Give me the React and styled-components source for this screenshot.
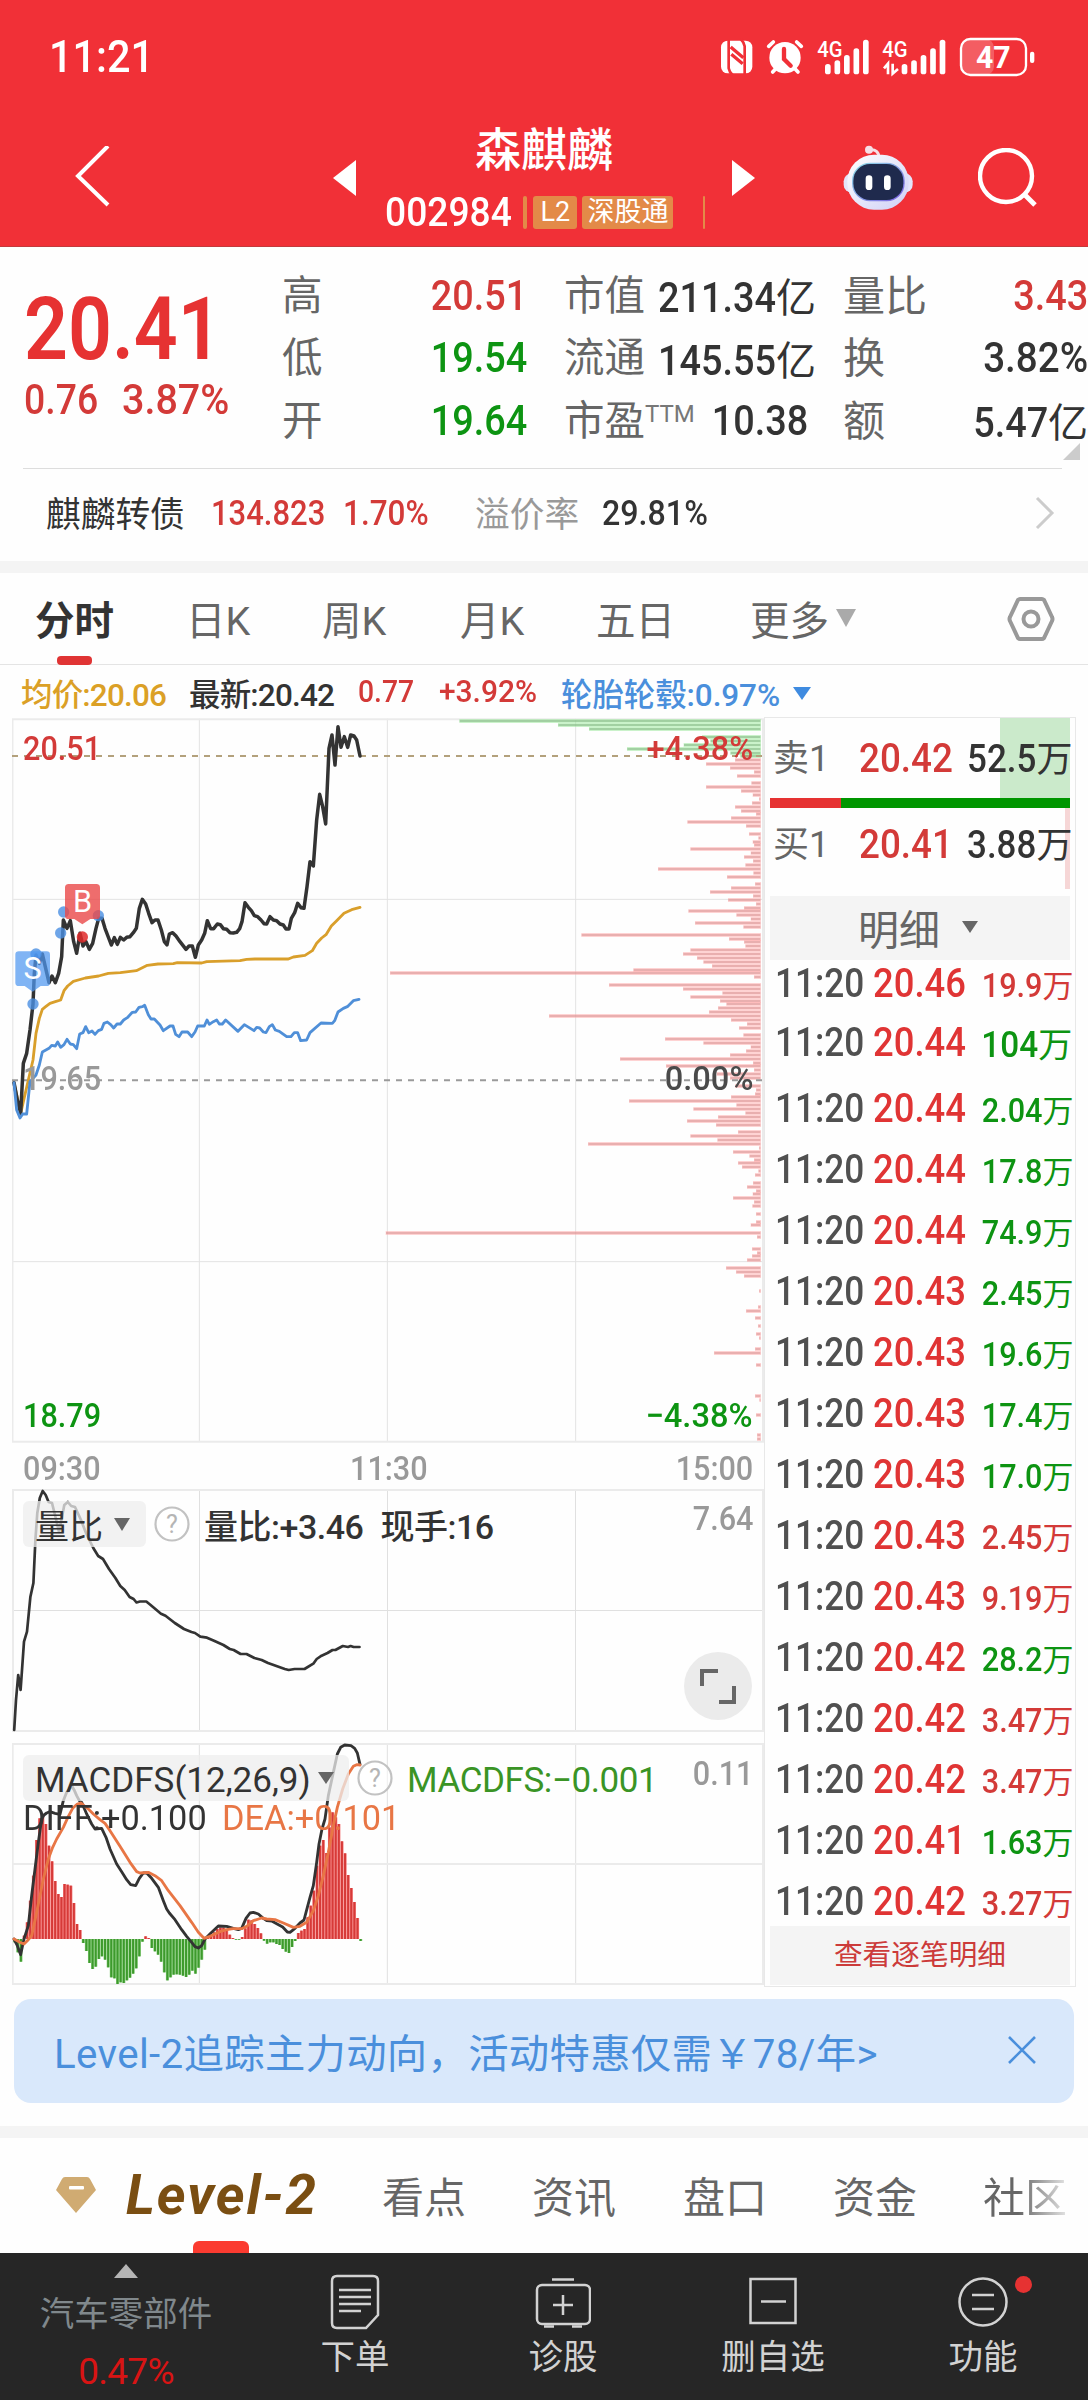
import React from 'react';
import styled, { createGlobalStyle, css } from 'styled-components';

const RED = '#e03434';
const UP = '#d33a38';
const DOWN = '#0d9412';
const INK = '#333';
const GREY = '#666';
const PALE = '#999';
const BLUE = '#4a8fdc';

const GlobalStyle = createGlobalStyle`
  * { box-sizing: border-box; }
  html, body { margin: 0; background: #fefefe; }
  body {
    width: 1088px;
    font-family: Roboto, 'Noto Sans CJK SC', sans-serif;
    color: ${INK};
    white-space: nowrap;
    overflow-x: hidden;
  }
  svg { display: block; flex: none; }
`;

const Page = styled.div`
  width: 1088px;
  height: 2400px;
  display: flex;
  flex-direction: column;
  overflow: hidden;
`;

// narrow figures: squeezed towards the side they are aligned to
const Num = styled.span`
  display: inline-block;
  font-size: ${(p) => p.$size || 42}px;
  font-weight: ${(p) => p.$weight || 500};
  color: ${(p) => p.$color || INK};
  transform: scaleX(${(p) => p.$sx || 0.9});
  transform-origin: ${(p) => (p.$end ? 'right' : 'left')} center;
`;

const Cn = styled.span`
  font-size: ${(p) => p.$size || 40.5}px;
  font-weight: ${(p) => p.$weight || 400};
  color: ${(p) => p.$color || GREY};
`;

const Mixed = styled.span`
  font-size: ${(p) => p.$size}px;
  font-weight: ${(p) => p.$weight || 400};
  letter-spacing: ${(p) => p.$ls || 0}em;
  color: ${(p) => p.$color || INK};
  margin-left: ${(p) => p.$ml || 0}px;
  margin-top: ${(p) => p.$mt || 0}px;
`;

const Amount = styled.div`
  display: flex;
  align-items: baseline;
  padding-right: ${(p) => p.$pr || 0}px;
`;

const Unit = styled.span`
  font-size: ${(p) => p.$size}px;
  color: ${(p) => p.$color || INK};
`;

/* ---------- header ---------- */

const Top = styled.header`
  height: 247px;
  flex: none;
  background: #f13037;
  border-bottom: 1px solid #c33a3c;
  color: #fff;
`;

const StatusBar = styled.div`
  height: 113px;
  padding: 0 52px 0 49px;
  display: flex;
  justify-content: space-between;
  align-items: center;
`;

const NavBar = styled.div`
  height: 130px;
  display: grid;
  grid-template-columns: 74px 259px 422px 88px 135px 1fr;
  align-items: center;
`;

const Middle = styled.div`
  display: flex;
  align-items: center;
  height: 130px;
`;

const Stock = styled.div`
  width: 376px;
  flex: none;
  padding: 14px 0 0 29px;
  height: 133px;
`;

const StockName = styled.div`
  height: 48px;
  line-height: 48px;
  font-size: 46px;
  font-weight: 500;
  padding-left: 90px;
`;

const StockCode = styled.div`
  height: 32px;
  margin-top: 23px;
  display: flex;
  align-items: center;
`;

const Badge = styled.span`
  height: 33px;
  line-height: 32px;
  width: ${(p) => p.$w}px;
  flex: none;
  margin-left: ${(p) => p.$gap}px;
  text-align: center;
  font-size: 27px;
  background: #e38a48;
  border-radius: 3px;
`;

/* ---------- quote ---------- */

const Quote = styled.section`
  height: 221px;
  flex: none;
  display: grid;
  grid-template-columns: 258px 245px 244px 245px;
  padding: 17px 0 0 24px;
  grid-template-rows: repeat(3, 62.5px);
`;

const PriceBlock = styled.div`
  grid-row: 1 / 4;
  padding-top: 20px;
`;

const Price = styled.div`
  height: 88px;
  line-height: 90px;
`;

const Change = styled.div`
  height: 56px;
  line-height: 56px;
  display: grid;
  grid-template-columns: 98px 1fr;
  justify-items: start;
`;

const Stat = styled.div`
  display: flex;
  align-items: center;
  justify-content: space-between;
  margin-left: ${(p) => p.$ml || 0}px;
  width: 245px;
  > ${Cn} {
    padding-bottom: 6px;
  }
`;

const Sup = styled.sup`
  font-size: 24px;
  color: #777;
  line-height: 0;
  vertical-align: 13px;
`;

const Divider = styled.div`
  height: 1px;
  flex: none;
  margin: 0 26px 0 23px;
  background: #ddd;
`;

const Corner = styled.i`
  width: 0;
  height: 0;
  position: absolute;
  left: 1063px;
  top: 443px;
  border-left: 17px solid transparent;
  border-bottom: 17px solid #ccc;
`;

const Bond = styled.section`
  height: 92px;
  flex: none;
  display: grid;
  grid-template-columns: 165px 132px 132px 127px 433px 1fr;
  align-items: center;
  justify-items: start;
  padding: 0 0 4px 46px;
  > ${Cn} {
    padding-bottom: 2px;
  }
`;

const Band = styled.div`
  height: 12px;
  flex: none;
  background: #f4f4f4;
`;

/* ---------- period tabs ---------- */

const PeriodTabs = styled.nav`
  height: 92px;
  flex: none;
  display: grid;
  grid-template-columns: 151px 136px 138px 136px 154px 257px 1fr;
  align-items: center;
  padding-left: 35px;
  border-bottom: 1px solid #e4e4e4;
`;

const Period = styled.div`
  position: relative;
  height: 92px;
  padding-bottom: 3px;
  font-size: 39.5px;
  color: ${GREY};
  display: flex;
  align-items: center;
  ${(p) => p.$active && css`
    color: ${INK};
    font-weight: 700;
    &::after {
      content: '';
      position: absolute;
      left: 22px;
      bottom: 0;
      width: 35px;
      height: 9px;
      border-radius: 4px;
      background: ${RED};
    }
  `}
`;

const Down = styled.i`
  border: ${(p) => p.$w / 2}px solid transparent;
  border-top: ${(p) => p.$h}px solid ${(p) => p.$color};
  border-bottom: 0;
  margin-left: ${(p) => p.$ml || 0}px;
  margin-top: ${(p) => p.$mt || 0}px;
  justify-self: start;
`;

const Info = styled.div`
  height: 53px;
  flex: none;
  display: grid;
  grid-template-columns: 168px 169px 81px 122px auto 1fr;
  align-items: center;
  justify-items: start;
  padding-left: 21px;
`;

/* ---------- board: charts + tape ---------- */

const Board = styled.section`
  height: 1271px;
  flex: none;
  display: flex;
  padding-left: 12px;
`;

const Charts = styled.div`
  width: 752px;
`;

const Pane = styled.div`
  position: relative;
  height: ${(p) => p.$h}px;
  margin-top: ${(p) => p.$mt || 0}px;
`;

const Label = styled(Num)`
  position: absolute;
  left: ${(p) => (p.$end ? 'auto' : `${p.$l || 11}px`)};
  right: ${(p) => (p.$end ? '11px' : 'auto')};
  top: ${(p) => p.$t}px;
  line-height: 34px;
`;

const TimeAxis = styled.div`
  height: 46px;
  display: grid;
  grid-template-columns: 327px 1fr auto;
  align-items: center;
  justify-items: start;
  padding: 4px 11px 0 11px;
`;

const Legend = styled.div`
  position: absolute;
  left: 11px;
  top: 12px;
  height: 46px;
  display: flex;
  align-items: center;
`;

const Picker = styled.div`
  width: ${(p) => p.$w}px;
  height: 46px;
  padding-left: 12px;
  display: flex;
  align-items: center;
  background: rgba(238, 238, 238, 0.75);
  border-radius: 6px;
  margin-right: 8px;
`;

const Expand = styled.div`
  position: absolute;
  left: 672px;
  top: 163px;
  width: 68px;
  height: 68px;
  border-radius: 50%;
  background: #ebebeb;
`;

const Tape = styled.aside`
  width: 312px;
  height: 1270px;
  margin-top: -1px;
  border: 1px solid #e8e8e8;
  padding: 0 5px;
  display: flex;
  flex-direction: column;
`;

const Level = styled.div`
  height: ${(p) => p.$h}px;
  padding: ${(p) => p.$pt}px 1px 0 3px;
  display: grid;
  grid-template-columns: 86px 1fr auto;
  align-items: start;
  justify-items: start;
  line-height: 48px;
  background: linear-gradient(${(p) => p.$tint}, ${(p) => p.$tint}) right top / ${(p) => p.$fill}px 100% no-repeat;
`;

const Ratio = styled.div`
  height: 10px;
  background: linear-gradient(90deg, #e63232 71px, #009600 71px);
`;

const TapeHead = styled.div`
  height: 64px;
  margin-top: 7px;
  padding: 0 0 3px 88px;
  display: flex;
  align-items: center;
  background: #f4f4f4;
`;

const Tick = styled.div`
  height: ${(p) => p.$h}px;
  flex: none;
  display: grid;
  grid-template-columns: 98px 1fr auto;
  align-items: center;
  justify-items: start;
  padding: 0 4px 0 5px;
`;

const TapeFoot = styled.div`
  height: 59px;
  flex: none;
  line-height: 59px;
  text-align: center;
  font-size: 28.7px;
  color: #cc3b3a;
  background: #f4f4f4;
  margin-top: -6px;
`;

/* ---------- banner and bottom ---------- */

const Banner = styled.div`
  height: 104px;
  flex: none;
  margin: 10px 14px 23px;
  padding: 0 38px 2px 40px;
  display: flex;
  align-items: center;
  justify-content: space-between;
  border-radius: 17px;
  background: #d9e8fb;
  color: ${BLUE};
  font-size: 40.3px;
  letter-spacing: 0.009em;
`;

const InfoTabs = styled.nav`
  position: relative;
  height: 115px;
  flex: none;
  display: grid;
  grid-template-columns: 70px 256px 150px 151px 150px 150px 1fr;
  align-items: center;
  padding: 0 0 2px 56px;
  &::after {
    content: '';
    position: absolute;
    left: 193px;
    bottom: 0;
    width: 56px;
    height: 12px;
    border-radius: 6px 6px 0 0;
    background: #fb3b30;
  }
`;

const Brand = styled.span`
  font-size: 55px;
  font-weight: 700;
  font-style: italic;
  letter-spacing: 0.035em;
  color: #7a4e12;
`;

const Fade = styled.span`
  background: linear-gradient(90deg, #666 35px, #eee 88px);
  -webkit-background-clip: text;
  color: transparent;
  font-size: 42px;
`;

const BottomBar = styled.footer`
  height: 147px;
  flex: none;
  display: grid;
  grid-template-columns: 252px 206px 210px 210px 210px;
  background: #262626;
  color: #d2d2d2;
`;

const Sector = styled.div`
  display: flex;
  flex-direction: column;
  align-items: center;
  padding-top: 11px;
  line-height: 58px;
`;

const Up = styled.i`
  border: 12.5px solid transparent;
  border-bottom: 14px solid #b5b5b5;
  border-top: 0;
  margin-bottom: 7px;
`;

const Action = styled.div`
  position: relative;
  display: flex;
  flex-direction: column;
  align-items: center;
  padding-top: 20px;
  font-size: 34.5px;
  line-height: 44px;
`;

const Dot = styled.i`
  position: absolute;
  left: 137px;
  top: 23px;
  width: 17px;
  height: 17px;
  border-radius: 50%;
  background: #e63232;
`;

const ActionLabel = styled.span`
  margin-top: 4px;
`;

/* ---------- icons ---------- */

const Signal = ({ x, bars }) =>
  bars.map((h, i) => (
    <rect key={i} x={x + i * 28.5} y={148 - h} width="17" height={h} rx="8" fill="#fff" />
  ));

const StatusIcons = () => (
  <svg width="316" height="40" viewBox="58 36 948 120">
    <rect x="61" y="47" width="94" height="98" rx="20" fill="#fff" />
    <g stroke="#f13037" strokeWidth="8" fill="none">
      <path d="M84 44V130Q86 142 96 150M132 148V64Q130 52 120 42" />
      <path d="M90 66L128 98M92 88L126 116" strokeWidth="10" />
    </g>
    <g fill="none" stroke="#fff" strokeWidth="11" strokeLinecap="round">
      <path d="M204 64L218 51M302 64L288 51M216 141L228 128M292 141L280 128" />
    </g>
    <circle cx="253" cy="98" r="47" fill="#fff" />
    <path d="M250 72V102L270 122" fill="none" stroke="#f13037" strokeWidth="13" strokeLinecap="round" />
    <g fill="#fff" fontSize="66" fontWeight="500">
      <text x="350" y="95" textLength="76" lengthAdjust="spacingAndGlyphs">4G</text>
      <text x="545" y="95" textLength="76" lengthAdjust="spacingAndGlyphs">4G</text>
    </g>
    <Signal x={373} bars={[31, 42, 58, 78, 104]} />
    <Signal x={603} bars={[31, 42, 58, 78, 104]} />
    <path d="M550 130L562 116V148M576 116V146L592 132" fill="none" stroke="#fff" strokeWidth="8" />
    <rect x="782" y="42" width="98" height="108" rx="26" fill="#fff" fillOpacity=".22" />
    <rect x="781" y="42" width="195" height="108" rx="28" fill="none" stroke="#fff" strokeWidth="7" />
    <rect x="988" y="80" width="13" height="34" rx="6" fill="#fff" />
    <text x="826" y="130" fill="#fff" fontSize="96" fontWeight="700" textLength="104" lengthAdjust="spacingAndGlyphs">47</text>
  </svg>
);

const Robot = () => (
  <svg width="70" height="66" viewBox="430 355 210 198">
    <defs>
      <linearGradient id="shell" x1="0" y1="0" x2="1" y2="1">
        <stop offset="0" stopColor="#fff" />
        <stop offset="1" stopColor="#cfd0f6" />
      </linearGradient>
      <linearGradient id="rim" x1="0" y1="0" x2="1" y2="1">
        <stop offset="0" stopColor="#8fe0e8" />
        <stop offset="1" stopColor="#7a5be0" />
      </linearGradient>
    </defs>
    <path d="M508 370Q538 366 538 394" fill="none" stroke="#f6dfe6" strokeWidth="9" />
    <circle cx="508" cy="369" r="12" fill="#f6dfe6" />
    <rect x="432" y="440" width="207" height="58" rx="24" fill="#e4e4fa" />
    <rect x="443" y="384" width="184" height="165" rx="80" fill="url(#shell)" />
    <rect x="457" y="408" width="158" height="116" rx="54" fill="url(#rim)" />
    <rect x="461" y="412" width="150" height="108" rx="50" fill="#1f2a4d" />
    <rect x="498" y="446" width="20" height="44" rx="10" fill="#fff" />
    <rect x="553" y="446" width="20" height="44" rx="10" fill="#fff" />
  </svg>
);

const Help = () => (
  <svg width="36" height="36" viewBox="0 0 36 36">
    <circle cx="18" cy="18" r="16.5" fill="#fff" fillOpacity=".5" stroke="#c2c2c2" strokeWidth="2.2" />
    <text x="18" y="27" fontSize="25" textAnchor="middle" fill="#b5b5b5">?</text>
  </svg>
);

/* ---------- chart data ---------- */

// chart coordinates are three units per screen pixel
const PRICE = '42,1148 52,1200 62,1240 70,1090 80,1060 90,990 99,912 103,820 108,765 118,790 127,762 147,848 156,828 166,848 176,820 185,770 190,660 201,685 211,662 221,725 230,760 240,700 249,738 258,725 268,748 278,730 288,685 296,655 306,655 315,685 334,735 343,713 352,733 361,712 371,720 380,712 390,710 400,698 409,685 418,625 427,598 437,612 446,640 456,668 465,660 474,660 484,690 493,725 501,735 508,702 518,698 528,708 540,725 558,748 567,738 577,738 586,772 595,735 605,720 614,700 622,662 632,686 641,686 652,672 661,674 670,686 680,688 690,698 700,699 710,697 719,686 726,665 735,608 745,622 754,632 763,647 773,650 783,660 792,671 800,672 810,650 820,660 830,662 840,672 850,675 858,687 867,687 874,655 884,638 893,610 903,623 912,625 921,560 930,485 940,498 950,360 959,283 968,320 977,372 987,145 996,105 1005,195 1014,80 1023,142 1033,110 1043,142 1052,105 1062,108 1070,120 1080,168';
const AVERAGE = '42,1148 62,1240 85,1140 99,1080 108,1000 118,955 127,928 137,920 150,910 166,905 182,900 192,872 203,858 220,844 256,834 296,828 325,820 361,818 409,812 442,796 474,792 520,791 532,788 605,789 620,785 720,782 740,778 765,777 865,777 880,771 915,766 937,752 950,730 965,714 978,704 994,678 1010,662 1032,640 1055,629 1080,622';
const SECTOR = '42,1148 50,1230 60,1254 68,1242 80,1242 90,1145 108,1125 118,1095 127,1056 147,1045 155,1036 166,1038 173,1026 182,1042 192,1034 201,1018 211,1032 220,1034 230,1046 239,1002 249,998 257,980 266,998 276,993 285,1003 295,992 305,988 312,970 322,966 332,974 341,984 351,972 361,972 371,960 382,953 397,937 407,936 417,922 427,920 434,916 445,944 453,957 463,957 480,975 490,992 510,978 519,978 527,1003 537,1010 546,996 563,996 575,1010 585,996 593,978 613,978 621,960 628,973 640,965 650,960 658,972 667,972 677,960 714,994 733,974 762,992 770,982 779,984 790,996 798,998 808,980 817,974 826,990 838,994 860,1010 873,1010 883,998 893,998 902,1022 920,1020 930,998 963,969 997,970 1004,962 1014,936 1030,925 1042,920 1060,902 1077,898';

// [y, length] of every price level
const ASKS = [[63, 903], [75, 607], [87, 514], [111, 175], [123, 150], [135, 230], [147, 400], [159, 90], [168, 60]];
const BIDS = [
  [180, 76], [192, 163], [204, 91], [216, 19], [228, 70], [249, 27], [261, 163], [273, 58], [285, 23], [297, 4],
  [309, 25], [321, 76], [333, 58], [342, 13], [354, 88], [366, 219], [378, 43], [402, 34], [414, 6], [426, 23],
  [435, 19], [447, 210], [459, 29], [471, 49], [483, 22], [495, 45], [507, 307], [519, 21], [531, 100], [552, 16],
  [564, 88], [576, 151], [588, 22], [600, 97], [612, 13], [624, 49], [633, 216], [645, 72], [657, 29], [669, 196],
  [681, 51], [705, 537], [717, 94], [726, 49], [738, 45], [750, 210], [762, 232], [774, 190], [786, 171], [798, 145],
  [810, 381], [819, 1111], [831, 19], [855, 454], [867, 232], [879, 114], [891, 210], [903, 121], [912, 102],
  [924, 127], [936, 154], [948, 634], [960, 88], [972, 40], [984, 64], [1005, 51], [1017, 286], [1029, 171],
  [1041, 29], [1053, 43], [1065, 91], [1077, 421], [1089, 22], [1098, 283], [1110, 19], [1122, 131], [1134, 91],
  [1158, 76], [1170, 13], [1182, 16], [1191, 88], [1203, 394], [1215, 72], [1227, 201], [1239, 45], [1251, 127],
  [1263, 220], [1275, 133], [1296, 67], [1308, 210], [1320, 129], [1332, 517], [1344, 4], [1356, 82], [1368, 33],
  [1380, 19], [1389, 67], [1401, 55], [1413, 6], [1425, 16], [1449, 22], [1461, 40], [1473, 13], [1482, 23],
  [1494, 82], [1506, 19], [1518, 24], [1542, 13], [1566, 13], [1575, 29], [1599, 1124], [1611, 10], [1647, 25],
  [1659, 10], [1668, 25], [1680, 40], [1704, 103], [1716, 73], [1728, 49], [1773, 4], [1821, 7], [1833, 43],
  [1854, 16], [1878, 7], [1902, 13], [1914, 4], [1947, 16], [1959, 139], [1995, 13], [2088, 16], [2100, 3],
  [2145, 13], [2205, 10], [2217, 10],
];

const VOLUME_RATIO = '14.2,1730 16,1700 18.2,1675 20.6,1690 24,1641.7 27,1631.7 30.4,1596.7 33.4,1583 35.4,1540 37.3,1513 39.8,1498 42.7,1491 45.7,1495 48.6,1502 52,1503 55.5,1517 59,1532 62,1517 64.3,1505 67.8,1502 71.2,1506 75,1507 81,1520 86,1533 93.3,1548 98.2,1556 103,1559 109,1569 115.4,1578 120.3,1586 124.7,1590 129.6,1597 133.6,1599 136.5,1602.5 140,1601.5 146.3,1601.5 150.3,1604.7 161,1613.7 165.5,1615.7 174.8,1623 184,1629 191.5,1632 195,1633 200.3,1636.7 207,1637.7 214,1640.7 223.4,1645 229.8,1649 233.7,1650 240.6,1654 246.5,1654 254.4,1658 261.7,1660 268,1663 284.8,1669 288.7,1670 294.6,1669 304.5,1669 313.3,1663.7 316.7,1659 321.6,1655.7 327.5,1653 332.5,1650 335.4,1650 342.8,1646 348,1647 350.6,1646 353.6,1647 359.5,1647';

const DIFF = '42,630 52,650 62,677 72,630 85,590 95,500 105,420 115,340 125,270 132,258 140,252 150,248 165,253 180,256 190,215 200,190 210,178 215,170 222,182 230,200 238,215 245,220 260,255 275,285 285,300 305,298 318,325 330,360 350,405 365,428 380,452 392,467 407,470 418,448 430,432 440,432 455,448 475,475 490,515 500,540 508,552 525,572 545,602 560,622 575,640 585,653 595,657 605,650 615,630 632,613 655,591 680,592 700,598 715,602 725,598 738,568 750,552 760,550 775,555 790,568 800,575 815,576 830,584 848,594 862,609 870,610 885,598 900,582 912,573 922,535 930,505 940,470 950,400 957,345 966,300 975,270 985,200 1000,130 1012,75 1022,55 1034,48 1053,50 1064,58 1072,72 1080,106';
const DEA = '42,630 60,640 72,645 85,632 95,620 108,560 118,510 130,450 145,390 158,355 170,330 190,295 205,262 218,238 232,225 242,222 250,228 265,240 280,255 300,272 315,283 330,305 360,352 390,400 410,428 420,432 445,430 465,440 485,455 505,485 540,530 575,580 595,610 612,628 630,622 660,608 680,602 700,599 725,599 740,592 760,575 785,567 800,570 825,572 850,582 880,595 900,592 920,580 940,545 955,500 970,440 985,370 1000,290 1012,235 1028,180 1045,135 1060,112 1070,107 1080,108';

const MACD = [
  -10, -40, -68, 10, 50, 115, 190, 297, 362, 370, 345, 280, 233, 174, 135, 126, 165, 163, 160, 108, 45, 27, -12, -36,
  -72, -90, -83, -60, -52, -62, -85, -115, -118, -135, -130, -132, -124, -116, -104, -88, -52, -8, 8, 3, -27, -37, -47,
  -68, -100, -124, -115, -107, -106, -107, -110, -114, -107, -95, -104, -86, -62, -32, 5, 12, 20, 30, 34, 34, 28, 13,
  3, -2, -2, 6, 32, 58, 56, 45, 33, 17, -5, -14, -10, -10, -15, -18, -30, -38, -42, -24, -6, 18, 25, 30, 65, 100, 145,
  220, 280, 297, 258, 335, 380, 365, 345, 293, 257, 192, 153, 111, 63, -6,
];

const TICKS = [
  ['20.46', '19.9', 1], ['20.44', '104', 0], ['20.44', '2.04', 0], ['20.44', '17.8', 0],
  ['20.44', '74.9', 0], ['20.43', '2.45', 0], ['20.43', '19.6', 0], ['20.43', '17.4', 0],
  ['20.43', '17.0', 0], ['20.43', '2.45', 1], ['20.43', '9.19', 1], ['20.42', '28.2', 0],
  ['20.42', '3.47', 1], ['20.42', '3.47', 1], ['20.41', '1.63', 0], ['20.42', '3.27', 1],
];

const tickHeight = (i) => [46, 72][i] || 61;

const Line = styled.polyline`
  fill: none;
  stroke: ${(p) => p.$color};
  stroke-width: ${(p) => p.$w};
  stroke-linejoin: round;
  stroke-linecap: round;
`;

const Depth = ({ rows, halo, core }) =>
  rows.map(([y, len]) => (
    <g key={y}>
      <rect x={2281 - len} y={y - 6} width={len + 2} height="12" fill={halo} />
      <rect x={2282 - len} y={y - 3} width={len - 1} height="6" fill={core} />
    </g>
  ));

const PriceChart = () => (
  <svg width="752" height="725" viewBox="36 54 2256 2175">
    <g stroke="#e3e3e3" strokeWidth="3">
      <path d="M598 56V2225M1162 56V2225M1727 56V2225M36 598H2292M36 1685H2292" />
      <path d="M36 57.5H2292M36 2225H2292M37.5 56V2226M2289 56V2226" stroke="#ebebeb" strokeWidth="6" />
    </g>
    <Depth rows={ASKS} halo="rgba(150,230,150,.5)" core="rgba(130,180,130,.55)" />
    <Depth rows={BIDS} halo="rgba(255,160,160,.45)" core="rgba(212,140,140,.5)" />
    <path d="M36 168H2292" stroke="#b3a17c" strokeWidth="6" strokeDasharray="18 18" />
    <path d="M36 1141H2292" stroke="#9a9a9a" strokeWidth="6" strokeDasharray="18 18" />
    <Line points={AVERAGE} $color="#d99f2b" $w={8.5} />
    <Line points={PRICE} $color="#333" $w={10.5} />
    <Line points={SECTOR} $color="#4f8fd8" $w={8.5} />
    <g fill="#4a8fe2" fillOpacity=".8">
      <circle cx="99" cy="912" r="17" />
      <circle cx="182" cy="699" r="17" />
      <circle cx="191" cy="636" r="17" />
      <circle cx="295" cy="647" r="17" />
      <circle cx="108" cy="762" r="17" />
    </g>
    <circle cx="247" cy="711" r="17" fill="#e02a2a" fillOpacity=".85" />
    <path d="M57 754H140Q150 754 150 764V848Q150 858 140 858H122L98 875L74 858H57Q46 858 46 848V764Q46 754 57 754Z" fill="#4f97f0" fillOpacity=".72" />
    <path d="M206 552H289Q300 552 300 563V647Q300 657 290 657H271L247 673L223 657H206Q195 657 195 647V563Q195 552 206 552Z" fill="#ea4848" fillOpacity=".8" />
    <g fill="#fff" fontSize="92" textAnchor="middle">
      <text x="98" y="837">S</text>
      <text x="248" y="636">B</text>
    </g>
  </svg>
);

const RatioChart = () => (
  <svg width="752" height="243" viewBox="12 1489 752 243">
    <path d="M199.5 1489V1731M387.5 1489V1731M575.5 1489V1731M12 1610.5H764" stroke="#e0e0e0" />
    <path d="M13 1490H763V1731H13Z" fill="none" stroke="#ebebeb" strokeWidth="2" />
    <Line points={VOLUME_RATIO} $color="#333" $w={2.7} />
  </svg>
);

const MacdChart = () => (
  <svg width="752" height="242" viewBox="36 42 2256 726">
    <path d="M598 45V765M1162 45V765M1727 45V765" stroke="#e0e0e0" strokeWidth="3" />
    <path d="M38 45H2289V765H38ZM38 405H2289" fill="none" stroke="#ebebeb" strokeWidth="6" />
    {MACD.map((v, i) => {
      const x = 39.5 + i * 9.35;
      const y = v > 0 ? 630 - v : 630;
      return (
        <g key={i}>
          <rect x={x} y={y} width="9.35" height={Math.abs(v)} fill={v > 0 ? '#f58080' : '#8fd084'} />
          <rect x={x + 1.5} y={y} width="6" height={Math.abs(v)} fill={v > 0 ? '#d63a38' : '#3d9a2c'} />
        </g>
      );
    })}
    <Line points={DIFF} $color="#333" $w={8.5} />
    <Line points={DEA} $color="#e87645" $w={8.5} />
  </svg>
);

const BTN = { fill: 'none', stroke: '#d2d2d2', strokeWidth: 2.5 };

export default function App() {
  return (
    <Page>
      <GlobalStyle />
      <Top>
        <StatusBar>
          <Num $size={45} $color="#fff" $sx={0.92}>11:21</Num>
          <StatusIcons />
        </StatusBar>
        <NavBar>
          <span />
          <svg width="38" height="64" viewBox="0 0 38 64">
            <path d="M34 0L4 30L34 59" fill="none" stroke="#fff" strokeWidth="4" />
          </svg>
          <Middle>
            <svg width="23" height="36" viewBox="0 0 23 36"><path d="M23 0V36L0 18Z" fill="#fff" /></svg>
            <Stock>
              <StockName>森麒麟</StockName>
              <StockCode>
                <Num $size={40} $color="#fff" $sx={0.93}>002984</Num>
                <Badge $w={4} $gap={2} />
                <Badge $w={44} $gap={6}>L2</Badge>
                <Badge $w={91} $gap={5}>深股通</Badge>
                <Badge $w={2} $gap={30} />
              </StockCode>
            </Stock>
            <svg width="23" height="36" viewBox="0 0 23 36"><path d="M0 0V36L23 18Z" fill="#fff" /></svg>
          </Middle>
          <span />
          <Robot />
          <svg width="60" height="60" viewBox="0 0 60 60">
            <circle cx="28" cy="28" r="26" fill="none" stroke="#fff" strokeWidth="4.4" />
            <path d="M46 46L57 57" stroke="#fff" strokeWidth="5" />
          </svg>
        </NavBar>
      </Top>

      <Quote>
        <PriceBlock>
          <Price><Num $size={87} $color="#e63232" $weight={600} $sx={0.885}>20.41</Num></Price>
          <Change>
            <Num $color={UP} $sx={0.89}>0.76</Num>
            <Num $color={UP} $sx={0.94}>3.87%</Num>
          </Change>
        </PriceBlock>
        <Stat><Cn>高</Cn><Num $end $color={UP}>20.51</Num></Stat>
        <Stat $ml={37}><Cn>市值</Cn><Amount $pr={3}><Num $end>211.34</Num><Unit $size={40}>亿</Unit></Amount></Stat>
        <Stat $ml={72}><Cn $size={42}>量比</Cn><Num $end $color={UP}>3.43</Num></Stat>
        <Stat><Cn>低</Cn><Num $end $color={DOWN}>19.54</Num></Stat>
        <Stat $ml={37}><Cn>流通</Cn><Amount $pr={3}><Num $end>145.55</Num><Unit $size={40}>亿</Unit></Amount></Stat>
        <Stat $ml={72}><Cn $size={42}>换</Cn><Num $end $sx={0.92}>3.82%</Num></Stat>
        <Stat><Cn>开</Cn><Num $end $color={DOWN}>19.64</Num></Stat>
        <Stat $ml={37}><Cn>市盈<Sup>TTM</Sup></Cn><Amount $pr={1}><Num $end>10.38</Num></Amount></Stat>
        <Stat $ml={72}><Cn $size={42}>额</Cn><Amount><Num $end>5.47</Num><Unit $size={40}>亿</Unit></Amount></Stat>
      </Quote>
      <Corner />
      <Divider />
      <Bond>
        <Cn $size={34.7} $color={INK}>麒麟转债</Cn>
        <Num $size={35} $color={UP} $sx={0.885}>134.823</Num>
        <Num $size={35} $color={UP} $sx={0.9}>1.70%</Num>
        <Cn $size={34.7} $color={PALE}>溢价率</Cn>
        <Num $size={35} $sx={0.92}>29.81%</Num>
        <svg width="20" height="34" viewBox="0 0 20 34">
          <path d="M2 2L17 17L2 32" fill="none" stroke="#ccc" strokeWidth="3" />
        </svg>
      </Bond>
      <Band />

      <PeriodTabs>
        <Period $active>分时</Period>
        <Period>日K</Period>
        <Period>周K</Period>
        <Period>月K</Period>
        <Period>五日</Period>
        <Period>更多<Down $w={21} $h={18} $color="#aaa" $ml={7} /></Period>
        <svg width="48" height="46" viewBox="0 0 48 46">
          <path d="M13 3H35Q36 3 37 4L45 21Q46 23 45 25L37 42Q36 43 35 43H13Q12 43 11 42L3 25Q2 23 3 21L11 4Q12 3 13 3Z" fill="none" stroke="#999" strokeWidth="4" />
          <circle cx="24" cy="23" r="7.5" fill="none" stroke="#999" strokeWidth="4" />
        </svg>
      </PeriodTabs>
      <Info>
        <Mixed $size={31.5} $weight={500} $ls={-0.026} $color="#dba026">均价:20.06</Mixed>
        <Mixed $size={31.5} $weight={500} $ls={-0.026}>最新:20.42</Mixed>
        <Num $size={31.5} $color={UP}>0.77</Num>
        <Num $size={31.5} $color={UP} $sx={0.95}>+3.92%</Num>
        <Mixed $size={31.5} $weight={500} $ls={-0.003} $color={BLUE}>轮胎轮毂:0.97%</Mixed>
        <Down $w={18} $h={13} $color="#3f8be0" $ml={13} $mt={3} />
      </Info>

      <Board>
        <Charts>
          <Pane $h={725}>
            <PriceChart />
            <Label $size={34} $t={13} $color={UP}>20.51</Label>
            <Label $end $size={34} $sx={0.96} $t={13} $color={UP}>+4.38%</Label>
            <Label $size={34} $t={343} $color={PALE}>19.65</Label>
            <Label $end $size={34} $sx={0.96} $t={343} $color="#4a4a4a">0.00%</Label>
            <Label $size={34} $t={680} $color={DOWN}>18.79</Label>
            <Label $end $size={34} $sx={0.96} $t={680} $color={DOWN}>−4.38%</Label>
          </Pane>
          <TimeAxis>
            <Num $size={34} $color={PALE}>09:30</Num>
            <Num $size={34} $color={PALE}>11:30</Num>
            <Num $end $size={34} $color={PALE}>15:00</Num>
          </TimeAxis>
          <Pane $h={243}>
            <RatioChart />
            <Legend>
              <Picker $w={123}>
                <Cn $size={34} $color={INK}>量比</Cn>
                <Down $w={17} $h={13} $color={GREY} $ml={11} />
              </Picker>
              <Help />
              <Mixed $size={34} $weight={500} $ls={-0.014} $ml={14}>量比:+3.46</Mixed>
              <Mixed $size={34} $weight={500} $ls={-0.014} $ml={17}>现手:16</Mixed>
            </Legend>
            <Label $end $size={34} $t={12} $color={PALE}>7.64</Label>
            <Expand>
              <svg width="68" height="68" viewBox="0 0 68 68">
                <path d="M18 34V19H34M50 34V50H35" fill="none" stroke="#666" strokeWidth="4" />
              </svg>
            </Expand>
          </Pane>
          <Pane $h={242} $mt={11}>
            <MacdChart />
            <Legend>
              <Picker $w={326}>
                <Mixed $size={35} $mt={4}>MACDFS(12,26,9)</Mixed>
                <Down $w={17} $h={12} $color={GREY} $ml={7} />
              </Picker>
              <Help />
              <Mixed $size={35} $ml={14} $mt={4} $ls={-0.012} $color="#3a9425">MACDFS:−0.001</Mixed>
            </Legend>
            <Label $end $size={34} $t={13} $color={PALE}>0.11</Label>
            <Label $size={35} $sx={0.98} $l={11} $t={59} $weight={400}>DIFF:+0.100</Label>
            <Label $size={35} $sx={0.98} $l={210} $t={59} $weight={400} $color="#e87645">DEA:+0.101</Label>
          </Pane>
        </Charts>

        <Tape>
          <Level $h={80} $pt={17} $tint="#cbeacb" $fill={70}>
            <Cn $size={36}>卖1</Cn>
            <Num $size={40} $sx={0.92} $color={UP}>20.42</Num>
            <Amount><Num $end $size={38} $sx={0.92}>52.5</Num><Unit $size={36}>万</Unit></Amount>
          </Level>
          <Ratio />
          <Level $h={81} $pt={13} $tint="#f6d6d6" $fill={5}>
            <Cn $size={36}>买1</Cn>
            <Num $size={40} $sx={0.92} $color={UP}>20.41</Num>
            <Amount><Num $end $size={38} $sx={0.92}>3.88</Num><Unit $size={36}>万</Unit></Amount>
          </Level>
          <TapeHead>
            <Cn $size={41}>明细</Cn>
            <Down $w={16} $h={12} $color={GREY} $ml={22} />
          </TapeHead>
          {TICKS.map(([price, vol, up], i) => {
            const color = up ? UP : DOWN;
            const long = vol === '104';
            return (
              <Tick key={i} $h={tickHeight(i)}>
                <Num $size={40} $sx={0.88} $color="#505050">11:20</Num>
                <Num $size={40} $sx={0.91} $color={RED}>{price}</Num>
                <Amount>
                  <Num $end $size={long ? 37 : 34} $color={color}>{vol}</Num>
                  <Unit $size={long ? 34 : 31} $color={color}>万</Unit>
                </Amount>
              </Tick>
            );
          })}
          <TapeFoot>查看逐笔明细</TapeFoot>
        </Tape>
      </Board>

      <Banner>
        <span>Level-2追踪主力动向，活动特惠仅需￥78/年&gt;</span>
        <svg width="28" height="28" viewBox="0 0 28 28">
          <path d="M1 1L27 27M27 1L1 27" stroke={BLUE} strokeWidth="2.6" />
        </svg>
      </Banner>
      <Band />
      <InfoTabs>
        <svg width="40" height="36" viewBox="0 0 40 36">
          <path d="M9 0H31Q33 0 34 2L40 13L20 36L0 13L6 2Q7 0 9 0Z" fill="#d0ab72" />
          <rect x="13" y="9" width="15" height="3.5" rx="1" fill="#fff" />
        </svg>
        <Brand>Level-2</Brand>
        <Cn $size={42}>看点</Cn>
        <Cn $size={42}>资讯</Cn>
        <Cn $size={42}>盘口</Cn>
        <Cn $size={42}>资金</Cn>
        <Fade>社区</Fade>
      </InfoTabs>

      <BottomBar>
        <Sector>
          <Up />
          <Cn $size={34.5} $color="#80888c">汽车零部件</Cn>
          <Mixed $size={37} $ls={-0.02} $color="#d81414">0.47%</Mixed>
        </Sector>
        <Action>
          <svg width="56" height="58" viewBox="0 0 56 58" {...BTN}>
            <path d="M10 3H46Q51 3 51 8V42L39 55H10Q5 55 5 50V8Q5 3 10 3Z" />
            <path d="M12 17H44M12 24H44M12 31H44M12 38H34" />
          </svg>
          <ActionLabel>下单</ActionLabel>
        </Action>
        <Action>
          <svg width="56" height="58" viewBox="0 0 56 58" {...BTN}>
            <rect x="2" y="12" width="53" height="39" rx="5" />
            <path d="M17 6.5H39M28 22V42M18 32H38M9 53.5H19M37 53.5H47" />
          </svg>
          <ActionLabel>诊股</ActionLabel>
        </Action>
        <Action>
          <svg width="56" height="58" viewBox="0 0 56 58" {...BTN}>
            <rect x="5.5" y="6" width="45" height="44" />
            <path d="M16 28.5H41" />
          </svg>
          <ActionLabel>删自选</ActionLabel>
        </Action>
        <Action>
          <svg width="56" height="58" viewBox="0 0 56 58" {...BTN}>
            <circle cx="28" cy="29" r="23.5" />
            <path d="M17 22H39M17 36H39" />
          </svg>
          <Dot />
          <ActionLabel>功能</ActionLabel>
        </Action>
      </BottomBar>
    </Page>
  );
}
